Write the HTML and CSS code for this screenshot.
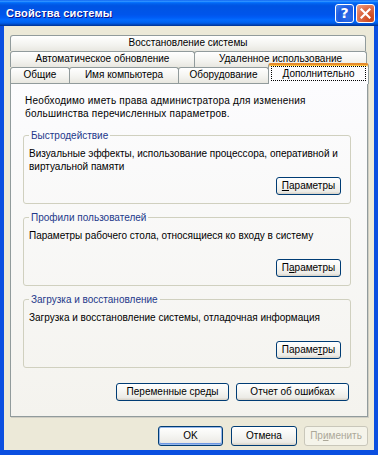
FILE: index.html
```html
<!DOCTYPE html>
<html lang="ru">
<head>
<meta charset="utf-8">
<title>Свойства системы</title>
<link rel="stylesheet" href="styles.css">
</head>
<body>
<div class="window">
  <div class="titlebar">
    <span class="title">Свойства системы</span>
    <div class="tbtns">
      <span class="tbtn help">?</span>
      <span class="tbtn close"><svg width="11" height="11" viewBox="0 0 11 11"><path d="M1.5 1.5 L9.5 9.5 M9.5 1.5 L1.5 9.5" stroke="#fff" stroke-width="2.2" stroke-linecap="square"/></svg></span>
    </div>
  </div>
  <div class="client">
    <div class="tabs">
      <div class="tabrow">
        <div class="tab t-restore">Восстановление системы</div>
      </div>
      <div class="tabrow">
        <div class="tab t-update">Автоматическое обновление</div>
        <div class="tab t-remote">Удаленное использование</div>
      </div>
      <div class="tabrow last">
        <div class="tab t-general">Общие</div>
        <div class="tab t-name">Имя компьютера</div>
        <div class="tab t-hw">Оборудование</div>
        <div class="tab t-adv selected"><span class="focus">Дополнительно</span></div>
      </div>
    </div>
    <div class="panel">
      <p class="intro">Необходимо иметь права администратора для изменения<br>большинства перечисленных параметров.</p>
      <fieldset class="group">
        <legend>Быстродействие</legend>
        <p class="gtext">Визуальные эффекты, использование процессора, оперативной и виртуальной памяти</p>
        <div class="grow"><button class="btn btn-param"><u>П</u>араметры</button></div>
      </fieldset>
      <fieldset class="group">
        <legend>Профили пользователей</legend>
        <p class="gtext">Параметры рабочего стола, относящиеся ко входу в систему</p>
        <div class="grow"><button class="btn btn-param">П<u>а</u>раметры</button></div>
      </fieldset>
      <fieldset class="group">
        <legend>Загрузка и восстановление</legend>
        <p class="gtext">Загрузка и восстановление системы, отладочная информация</p>
        <div class="grow"><button class="btn btn-param">Параме<u>т</u>ры</button></div>
      </fieldset>
      <div class="extra">
        <button class="btn btn-wide">Переменные среды</button>
        <button class="btn btn-wide">Отчет об ошибках</button>
      </div>
    </div>
    <div class="dlgbtns">
      <button class="btn btn-dlg default">OK</button>
      <button class="btn btn-dlg cancel">Отмена</button>
      <button class="btn btn-dlg apply" disabled>Пр<u>и</u>менить</button>
    </div>
  </div>
</div>
</body>
</html>
```

FILE: styles.css
```css
html, body {
  margin: 0;
  padding: 0;
  background: #ece9d8;
}

.window {
  width: 378px;
  height: 455px;
  box-sizing: border-box;
  background: #0b4fe0;
  display: flex;
  flex-direction: column;
  font-family: "Liberation Sans", Arial, sans-serif;
  font-size: 10px;
  color: #000;
  overflow: hidden;
}

.titlebar {
  height: 26px;
  flex: none;
  display: flex;
  align-items: center;
  justify-content: space-between;
  padding: 0 3px 0 6px;
  background: linear-gradient(to bottom, #0058ee 0%, #3a93ff 4%, #288eff 6%, #127dff 8%, #036ffc 10%, #0262ee 14%, #0057e5 20%, #0054e3 24%, #0055eb 56%, #005bf5 66%, #026afe 76%, #0062ef 86%, #0052d6 92%, #0040ab 96%, #003092 100%);
}

.title {
  color: #fff;
  font-weight: bold;
  font-size: 11px;
  letter-spacing: 0.2px;
  text-shadow: 1px 1px 0 #0f1089;
}

.tbtns {
  display: flex;
  gap: 2px;
}

.tbtn {
  width: 19px;
  height: 19px;
  box-sizing: border-box;
  border: 1px solid #fff;
  border-radius: 3px;
  display: flex;
  align-items: center;
  justify-content: center;
}

.help {
  background: radial-gradient(circle at 70% 70%, #2d6ee8 0%, #1c5ae0 55%, #4a8cf4 100%);
  color: #fff;
  font-weight: bold;
  font-size: 14px;
  font-family: "DejaVu Sans", sans-serif;
}

.close {
  background: radial-gradient(circle at 80% 80%, #cc4419 0%, #dc6a47 55%, #f0a48a 100%);
}

.close svg {
  display: block;
}

.client {
  flex: 1;
  margin: 0 4px 5px 4px;
  background: #ece9d8;
  padding: 9px 6px 0 6px;
  display: flex;
  flex-direction: column;
}

.tabs {
  display: flex;
  flex-direction: column;
}

.tabrow {
  display: flex;
  height: 16px;
}

.tabrow.last {
  align-items: flex-end;
  position: relative;
  z-index: 1;
}

.tab {
  box-sizing: border-box;
  height: 16px;
  border: 1px solid #919b9c;
  border-bottom: none;
  border-radius: 3px 3px 0 0;
  background: linear-gradient(to bottom, #ffffff, #f3f3ef 60%, #e8e7e0);
  line-height: 14px;
  text-align: center;
  white-space: nowrap;
  flex: none;
}

.t-restore { width: 356px; }
.t-update { width: 185px; }
.t-remote { width: 173px; margin-left: -1px; }
.t-general { width: 60px; }
.t-name { width: 110px; margin-left: -1px; }
.t-hw { width: 91px; margin-left: -1px; }
.t-adv { width: 101px; margin-left: -1px; }

.tab.selected {
  height: 21px;
  margin-top: -5px;
  margin-bottom: -1px;
  background: #fcfcfe;
  border-top: 2px solid #e68b2c;
  box-shadow: inset 0 1px 0 #ffc73c;
  padding: 1px 2px 0 2px;
}

.focus {
  display: block;
  outline: 1px dotted #000;
  outline-offset: -1px;
  line-height: 15px;
}

.panel {
  box-sizing: border-box;
  width: 358px;
  height: 334px;
  border: 1px solid #919b9c;
  background: linear-gradient(to bottom, #fcfcfe, #f4f3ee);
  box-shadow: 1px 1px 0 #d0cec4;
  padding: 10px 16px 0 12px;
  display: flex;
  flex-direction: column;
}

.intro {
  margin: 0;
  padding-left: 2px;
  line-height: 13px;
  letter-spacing: 0.2px;
}

.group {
  margin: 9px 0 0 0;
  border: 1px solid #d0d0bf;
  border-radius: 3px;
  padding: 0 9px 8px 5px;
  min-width: 0;
}

.group + .group {
  margin-top: 7px;
}

.group legend {
  padding: 0 2px;
  margin-left: 0;
  line-height: 13px;
  color: #23388a;
}

.gtext {
  margin: 5px 0 0 0;
  height: 26px;
  line-height: 13px;
}

.grow {
  display: flex;
  justify-content: flex-end;
  margin-top: 4px;
}

.btn {
  box-sizing: border-box;
  height: 18px;
  padding: 0;
  font-family: "Liberation Sans", Arial, sans-serif;
  font-size: 10px;
  color: #000;
  border: 1px solid #003c74;
  border-radius: 3px;
  background: linear-gradient(to bottom, #ffffff 0%, #f7f7f4 40%, #ecebe6 85%, #d6d0c5 100%);
  line-height: 14px;
  text-align: center;
}

.btn-param { width: 65px; }

.extra {
  display: flex;
  justify-content: flex-end;
  gap: 7px;
  margin-top: 15px;
  padding-right: 2px;
}

.btn-wide { width: 113px; }

.dlgbtns {
  display: flex;
  justify-content: flex-end;
  gap: 8px;
  margin-top: 9px;
}

.btn-dlg {
  height: 20px;
}

.default {
  width: 65px;
  box-shadow: inset 0 0 0 1px #97b8ea, inset 0 -1px 0 1px #6e98e4;
}

.cancel { width: 66px; }

.apply {
  width: 64px;
  margin-left: -1px;
  color: #aca899;
  border-color: #c9c7ba;
  background: #f5f4ea;
}
```
